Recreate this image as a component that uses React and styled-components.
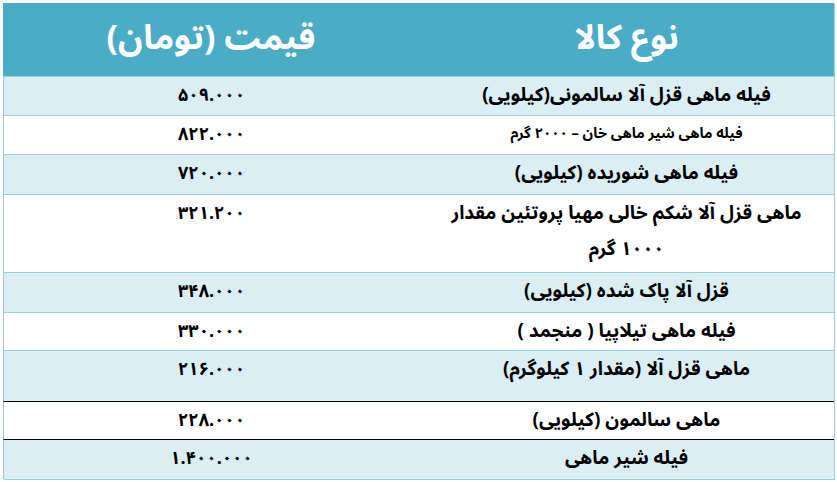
import React from "react";
import styled, { createGlobalStyle } from "styled-components";

const Global = createGlobalStyle`
  html, body { margin: 0; padding: 0; background: #ffffff; }
  body { font-family: "Noto Sans Arabic", "Noto Naskh Arabic", "DejaVu Sans", sans-serif; }
`;

const Table = styled.div`
  direction: rtl;
  margin: 3px 2px 0 4px;
  width: 831px;
  display: grid;
  grid-template-columns: 415px 416px;
  border-left: 1px solid #9ccfdd;
  border-right: 1px solid #9ccfdd;
  border-bottom: 1px solid #9ccfdd;
  box-sizing: border-box;
`;

const HeadCell = styled.div`
  height: 73px;
  background: #4bacc6;
  color: #ffffff;
  font-weight: 700;
  font-size: 34px;
  display: flex;
  align-items: center;
  justify-content: center;
  padding-bottom: 4px;
  box-sizing: border-box;
`;

const Cell = styled.div`
  height: ${(p) => p.$h}px;
  background: ${(p) => (p.$shade ? "#daeef3" : "#ffffff")};
  border-top: 1px solid ${(p) => (p.$dark ? "#000000" : "#9ccfdd")};
  border-left: ${(p) => (p.$first ? "1px solid #a3c3cf" : "none")};
  box-sizing: border-box;
  text-align: center;
  font-weight: 700;
  font-size: ${(p) => (p.$small ? 14.5 : p.$price ? 18 : 19)}px;
  line-height: 36px;
  color: #000000;
  padding: 0 14px;
`;

const Price = styled.span`
  direction: ltr;
  unicode-bidi: isolate;
  display: inline-block;
`;

const rows = [
  { name: "فیله ماهی قزل آلا سالمونی(کیلویی)", price: "۵۰۹.۰۰۰", h: 39, shade: true },
  { name: "فیله ماهی شیر ماهی خان – ۲۰۰۰ گرم", price: "۸۲۲.۰۰۰", h: 39, small: true },
  { name: "فیله ماهی شوریده (کیلویی)", price: "۷۲۰.۰۰۰", h: 40, shade: true },
  { name: "ماهی قزل آلا شکم خالی مهیا پروتئین مقدار ۱۰۰۰ گرم", price: "۳۲۱.۲۰۰", h: 78 },
  { name: "قزل آلا پاک شده (کیلویی)", price: "۳۴۸.۰۰۰", h: 40, shade: true },
  { name: "فیله ماهی تیلاپیا ( منجمد )", price: "۳۳۰.۰۰۰", h: 38 },
  { name: "ماهی قزل آلا (مقدار ۱ کیلوگرم)", price: "۲۱۶.۰۰۰", h: 51, shade: true },
  { name: "ماهی سالمون (کیلویی)", price: "۲۲۸.۰۰۰", h: 38, dark: true },
  { name: "فیله شیر ماهی", price: "۱.۴۰۰.۰۰۰", h: 40, shade: true, dark: true },
];

export default function App() {
  return (
    <>
      <Global />
      <Table>
        <HeadCell>نوع کالا</HeadCell>
        <HeadCell>قیمت (تومان)</HeadCell>
        {rows.map((r, i) => (
          <React.Fragment key={i}>
            <Cell $h={r.h} $shade={r.shade} $dark={r.dark} $small={r.small}>
              {r.name}
            </Cell>
            <Cell $h={r.h} $shade={r.shade} $dark={r.dark} $first $price>
              <Price>{r.price}</Price>
            </Cell>
          </React.Fragment>
        ))}
      </Table>
    </>
  );
}
